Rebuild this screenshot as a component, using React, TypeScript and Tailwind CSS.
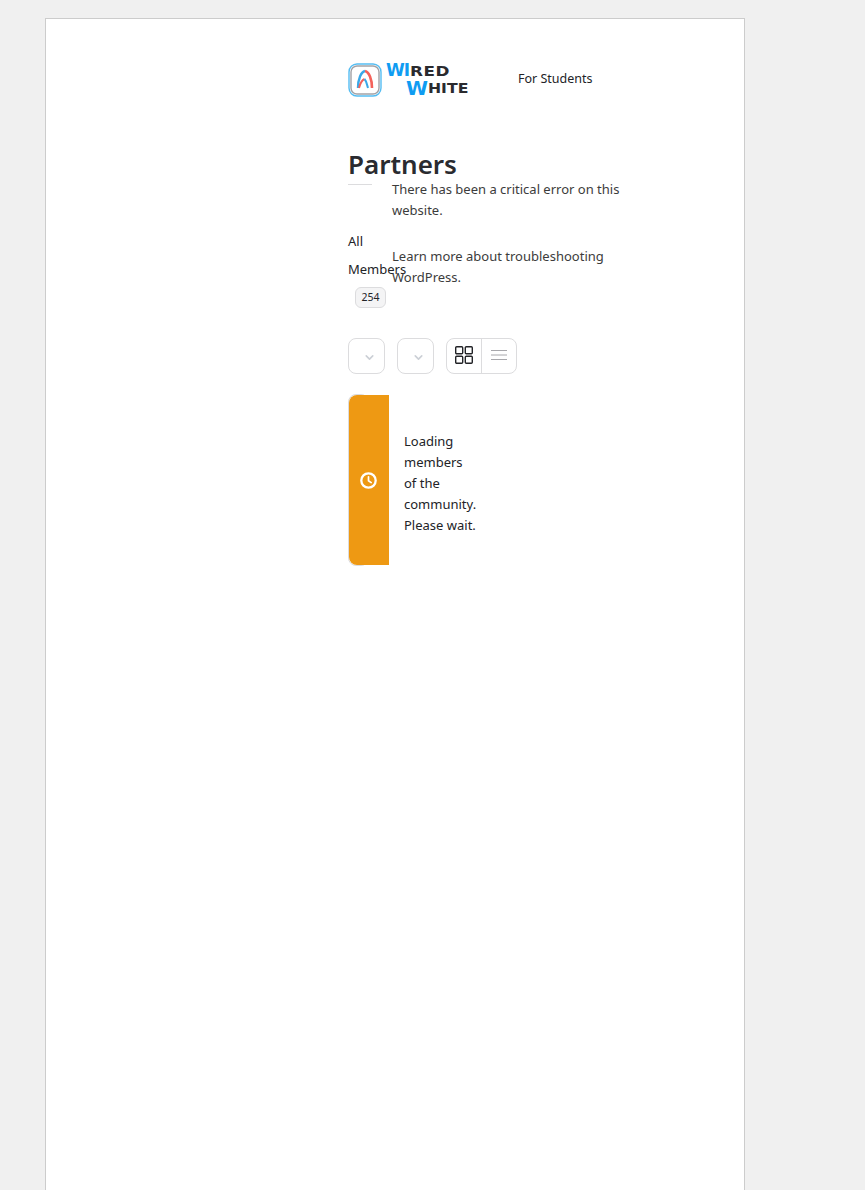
import React from "react";
import { ChevronDown } from "lucide-react";

const font = { fontFamily: '"Noto Sans", "Open Sans", sans-serif' };

const Logo = () => (
  <div className="flex items-center gap-[4px] h-[36px]">
    <svg width="34" height="34" viewBox="0 0 34 34" fill="none">
      <rect x="1" y="1" width="32" height="32" rx="8" stroke="#55bdf2" strokeWidth="1.4" />
      <rect x="3" y="3" width="28" height="28" rx="6" stroke="#a2a2a6" strokeWidth="1.4" />
      <path d="M10 25 C10 16 13 9 17 8" stroke="#3aa8e8" strokeWidth="2.4" />
      <path d="M17 8 C21 9 24 16 24 25" stroke="#f4625b" strokeWidth="2.6" />
      <path d="M11 25 C12 21 14 17 16.5 16" stroke="#f4625b" strokeWidth="2" />
      <path d="M16.5 16 C18.5 18 19 22 20 25" stroke="#3aa8e8" strokeWidth="2" />
    </svg>
    <div className="relative w-[84px] h-[34px] font-black leading-none" style={{ fontFamily: '"DejaVu Sans", sans-serif' }}>
      <span className="absolute left-0 top-[-1px] text-[17px] tracking-[-1px] text-[#0f9cf2] origin-left">WI</span>
      <span className="absolute left-[24px] top-[1px] text-[14px] tracking-[0.5px] text-[#2a2a2e] scale-x-[1.2] origin-left">RED</span>
      <span className="absolute left-[20px] top-[16px] text-[19px] text-[#0f9cf2] scale-x-[1.05] origin-left">W</span>
      <span className="absolute left-[42px] top-[18px] text-[14px] text-[#2a2a2e] scale-x-[1.12] origin-left">HITE</span>
    </div>
  </div>
);

const SelectBox = () => (
  <div className="w-[37px] h-[36px] rounded-lg border border-[#dcdcde] flex items-center justify-center pl-[6px] pt-[2px]">
    <ChevronDown size={13} strokeWidth={3} className="text-[#ccd0d6]" />
  </div>
);

export default function App() {
  return (
    <div className="min-h-[1190px] bg-[#f0f0f0] pt-[18px] pl-[45px] overflow-hidden" style={font}>
      <div className="w-[700px] h-[1172px] bg-white border border-[#cccccc] border-b-0 pl-[302px] text-[#222327]">
        <header className="flex items-center pt-[43px]">
          <Logo />
          <a className="ml-[48px] mb-[2px] text-[12.5px] leading-[34px] text-[#222327]">For Students</a>
        </header>

        <div className="relative mt-[47px]">
          <h1 className="text-[26px] leading-[38px] font-semibold text-[#2a2b30]">Partners</h1>
          <div className="w-[24px] h-px mt-[1px] bg-[#dcdcde]" />

          {/* error message sits over the tabs */}
          <div className="absolute left-[44px] top-[34px] w-[240px] text-[13px] leading-[21px] text-[#3c3c3c]">
            <p>There has been a critical error on this website.</p>
            <p className="mt-[25px]">Learn more about troubleshooting WordPress.</p>
          </div>

          <div className="w-[44px] mt-[42px] text-[13px] leading-[28px] text-[#222327] whitespace-nowrap">
            <div>All</div>
            <div>Members</div>
          </div>
          <div className="ml-[7px] mt-[4px] w-[31px] h-[21px] rounded-md border border-[#dcdcde] bg-[#f4f4f5] flex items-center justify-center text-[10.5px] text-[#222327]">
            254
          </div>
        </div>

        <div className="flex mt-[30px]">
          <SelectBox />
          <div className="ml-[12px]">
            <SelectBox />
          </div>
          <div className="ml-[12px] w-[71px] h-[36px] rounded-lg border border-[#dcdcde] flex">
            <div className="w-[35px] flex items-center justify-center pb-[2px] border-r border-[#dcdcde]">
              <svg width="18" height="18" viewBox="0 0 18 18" fill="none" stroke="#222327" strokeWidth="1.4">
                <rect x="0.7" y="0.7" width="7" height="7" rx="1" />
                <rect x="10.3" y="0.7" width="7" height="7" rx="1" />
                <rect x="0.7" y="10.3" width="7" height="7" rx="1" />
                <rect x="10.3" y="10.3" width="7" height="7" rx="1" />
              </svg>
            </div>
            <div className="flex-1 flex items-center justify-center pb-[2px]">
              <svg width="16" height="12" viewBox="0 0 16 12" stroke="#a8a8ac" strokeWidth="1">
                <line x1="0" y1="1.5" x2="16" y2="1.5" />
                <line x1="0" y1="6" x2="16" y2="6" />
                <line x1="0" y1="10.5" x2="16" y2="10.5" />
              </svg>
            </div>
          </div>
        </div>

        <div className="flex mt-[20px]">
          <div className="w-[21px] h-[172px] rounded-lg border border-[#dcdcde] shrink-0">
            <div className="w-[40px] h-[170px] rounded-l-lg bg-[#ee9913] flex items-center justify-center pr-[1px]">
              <svg width="17" height="17" viewBox="0 0 17 17" fill="none" stroke="#ffffff" strokeWidth="2.3" strokeLinecap="round" strokeLinejoin="round">
                <circle cx="8.5" cy="8.5" r="7.2" />
                <path d="M8.5 4.8 V8.7 L11.2 10.6" strokeWidth="1.7" />
              </svg>
            </div>
          </div>
          <p className="ml-[35px] mt-[6px] w-[73px] self-center text-[13px] leading-[21px] text-[#222327]">
            Loading members of the community. Please wait.
          </p>
        </div>
      </div>
    </div>
  );
}
